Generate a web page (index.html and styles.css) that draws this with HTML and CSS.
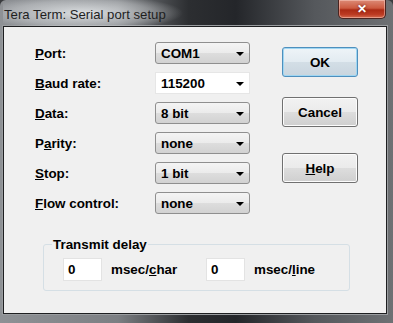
FILE: index.html
```html
<!DOCTYPE html>
<html lang="en">
<head>
	<meta charset="UTF-8">
	<title>Tera Term: Serial port setup</title>
	<link rel="stylesheet" href="styles.css">
</head>
<body>
	<div class="window">
		<div class="titlebar">
			<span class="title">Tera Term: Serial port setup</span>
			<button class="close">&#x2715;</button>
		</div>
		<div class="client">
			<div class="top">
				<div class="form">
					<label><u>P</u>ort:</label>
					<div class="combo">COM1</div>
					<label><u>B</u>aud rate:</label>
					<div class="combo edit">115200</div>
					<label><u>D</u>ata:</label>
					<div class="combo">8 bit</div>
					<label>P<u>a</u>rity:</label>
					<div class="combo">none</div>
					<label><u>S</u>top:</label>
					<div class="combo">1 bit</div>
					<label><u>F</u>low control:</label>
					<div class="combo">none</div>
				</div>
				<div class="buttons">
					<button class="btn default" id="ok">OK</button>
					<button class="btn" id="cancel">Cancel</button>
					<button class="btn" id="help"><u>H</u>elp</button>
				</div>
			</div>
			<fieldset class="group">
				<legend>Transmit delay</legend>
				<div class="field">0</div>
				<span class="unit">msec/<u>c</u>har</span>
				<div class="field">0</div>
				<span class="unit">msec/<u>l</u>ine</span>
			</fieldset>
		</div>
	</div>
</body>
</html>
```

FILE: styles.css
```css
*{
	margin: 0;
	padding: 0;
	box-sizing: border-box;
}
body{
	width: 393px;
	height: 323px;
	overflow: hidden;
	background: #3a3c3f;
	font-family: "Liberation Sans", Arial, sans-serif;
}
.window{
	width: 393px;
	height: 323px;
	padding: 0 6px 9px 3px;
	display: flex;
	flex-direction: column;
	background: linear-gradient(to right, #8e9195 0%, #7c7f83 30%, #2c2e31 48%, #24262a 60%, #55585c 80%, #6e7174 100%);
	border-radius: 6px 6px 0 0;
}
.titlebar{
	height: 26px;
	flex: none;
	position: relative;
	display: flex;
	align-items: center;
	background: radial-gradient(ellipse 100px 18px at 80px 13px, rgba(235,238,240,.85), rgba(235,238,240,.35) 70%, rgba(235,238,240,0));
}
.title{
	margin: 3px 0 0 1px;
	font-family: "Liberation Sans", Arial, sans-serif;
	font-size: 13.2px;
	color: #1e1e1e;
}
.close{
	position: absolute;
	top: 0;
	right: 1px;
	width: 48px;
	height: 19px;
	border: 1px solid #4a2420;
	border-top: none;
	border-radius: 0 0 5px 5px;
	background: linear-gradient(#dc8a76 0%, #cc5a40 45%, #ab2a14 55%, #bc3a22 80%, #d46a4e 100%);
	box-shadow: inset 0 0 0 1px rgba(255,220,210,.45);
	color: #fff;
	font-size: 12px;
	font-weight: bold;
	text-shadow: 0 0 3px #6a1a10;
}
.client{
	flex: 1;
	background: #f0f0f0;
	border: 1px solid #1e1f21;
	box-shadow: 0 0 0 1px #9a9da0;
	padding: 15px 0 0 0;
	font-size: 13.4px;
	font-weight: bold;
	color: #000;
}
.top{
	display: flex;
}
.form{
	display: grid;
	grid-template-columns: 120px 95px;
	grid-auto-rows: 22px;
	row-gap: 8px;
	align-items: center;
	margin-left: 31px;
}
.combo{
	height: 22px;
	position: relative;
	padding: 3px 0 0 5px;
	border: 1px solid #8f8f8f;
	border-radius: 3px;
	background: linear-gradient(#f4f4f4 0%, #ebebeb 50%, #dddddd 51%, #d2d2d2 100%);
}
.combo::after{
	content: "";
	position: absolute;
	right: 5px;
	top: 9px;
	border-left: 4px solid transparent;
	border-right: 4px solid transparent;
	border-top: 4px solid #000;
}
.combo.edit{
	border-color: #e6e6e6;
	border-radius: 0;
	background: #fff;
}
.buttons{
	display: flex;
	flex-direction: column;
	margin-left: 32px;
	padding-top: 5px;
}
.btn{
	width: 76px;
	height: 30px;
	font-family: inherit;
	font-size: 13.4px;
	font-weight: bold;
	color: #000;
	border: 1px solid #707070;
	border-radius: 3px;
	background: linear-gradient(#f2f2f2 0%, #ebebeb 50%, #dddddd 51%, #cfcfcf 100%);
	box-shadow: inset 0 0 0 1px #fcfcfc;
}
.btn.default{
	border-color: #4e8fbd;
	background: linear-gradient(#eef4f8 0%, #e2ebf1 50%, #d3dee6 51%, #c9d5de 100%);
	box-shadow: inset 0 0 0 1px #9fd6f2;
}
#cancel{
	margin-top: 20px;
}
#help{
	margin-top: 26px;
}
.group{
	margin: 23px 0 0 39px;
	width: 304px;
	height: 54px;
	border: 1px solid #d5dfe5;
	border-radius: 3px;
	display: flex;
	align-items: center;
	padding: 0 0 4px 8px;
}
.group legend{
	padding: 0 1px;
	font-size: 13.4px;
}
.field{
	width: 39px;
	height: 23px;
	margin-left: 11px;
	background: #fff;
	border: 1px solid #e3e3e3;
	padding: 3px 0 0 4px;
}
.field + .unit + .field{
	margin-left: 0;
}
.unit{
	margin-left: 9px;
	width: 95px;
}
```
